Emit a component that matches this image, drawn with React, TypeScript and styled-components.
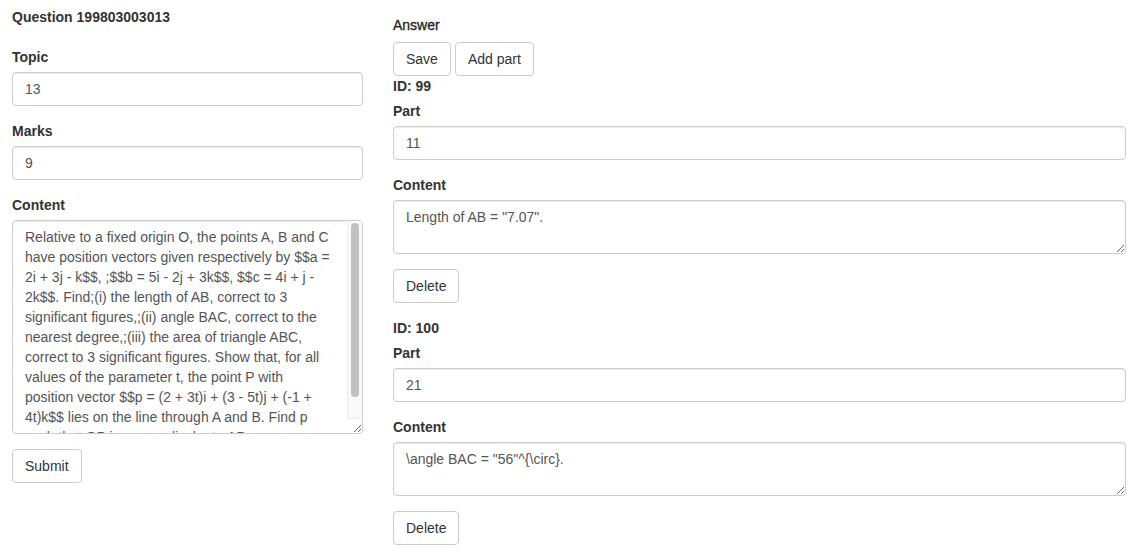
import styled, { createGlobalStyle } from 'styled-components';

const GlobalStyle = createGlobalStyle`
    * { box-sizing: border-box; }
    body {
        margin: 0;
        background: #fff;
        color: #333;
        font-family: "Liberation Sans", Helvetica, Arial, sans-serif;
        font-size: 14px;
        line-height: 20px;
    }
`;

const Page = styled.div`
    display: flex;
    align-items: flex-start;
    padding: 0 18px 0 12px;
`;

const LeftCol = styled.div`
    width: 351px;
    flex: none;
    padding-top: 7px;
`;

const RightCol = styled.div`
    flex: 1;
    margin-left: 30px;
    padding-top: 15px;
`;

const Title = styled.div`
    font-weight: bold;
    margin-bottom: 20px;
`;

const Caption = styled.div`
    color: #222;
    -webkit-text-stroke: 0.3px #222;
    margin-bottom: 7px;
`;

const Label = styled.label`
    display: block;
    font-weight: bold;
    margin-bottom: 5px;
`;

const Group = styled.div`
    margin-bottom: 15px;
`;

const Input = styled.input`
    display: block;
    width: 100%;
    height: 34px;
    padding: 6px 12px;
    font: inherit;
    color: #555;
    background: #fff;
    border: 1px solid #ccc;
    border-radius: 4px;
    box-shadow: inset 0 1px 1px rgba(0, 0, 0, 0.075);
    outline: none;
`;

const AreaWrap = styled.div`
    position: relative;
`;

const TextArea = styled.textarea<{ $h: number; $scroll?: boolean }>`
    display: block;
    width: 100%;
    height: ${(p) => p.$h}px;
    padding: 6px ${(p) => (p.$scroll ? 27 : 12)}px 6px 12px;
    font: inherit;
    line-height: 20px;
    color: #555;
    background: #fff;
    border: 1px solid #ccc;
    border-radius: 4px;
    box-shadow: inset 0 1px 1px rgba(0, 0, 0, 0.075);
    resize: vertical;
    outline: none;
    overflow: hidden;
`;

/* stands in for the macOS scroll bar that the headless browser hides */
const ScrollTrack = styled.div`
    position: absolute;
    top: 1px;
    right: 1px;
    bottom: 15px;
    width: 15px;
    background: #fafafa;
    border-left: 1px solid #ececec;
    border-bottom: 1px solid #ececec;
    border-top-right-radius: 3px;
    pointer-events: none;
`;

const ScrollThumb = styled.div`
    position: absolute;
    top: 2px;
    left: 3px;
    width: 8px;
    height: 174px;
    background: #c1c1c1;
    border-radius: 4px;
`;

const Button = styled.button`
    display: inline-block;
    height: 34px;
    padding: 6px 12px;
    font: inherit;
    color: #333;
    background: #fff;
    border: 1px solid #ccc;
    border-radius: 4px;
    cursor: pointer;
`;

const ButtonRow = styled.div`
    display: flex;
    gap: 4px;
`;

const PartBlock = styled.div`
    margin-bottom: 15px;
`;

const questionText =
    'Relative to a fixed origin O, the points A, B and C have position vectors given respectively by $$a = 2i + 3j - k$$, ;$$b = 5i - 2j + 3k$$, $$c = 4i + j - 2k$$. Find;(i) the length of AB, correct to 3 significant figures,;(ii) angle BAC, correct to the nearest degree,;(iii) the area of triangle ABC, correct to 3 significant figures. Show that, for all values of the parameter t, the point P with position vector $$p = (2 + 3t)i + (3 - 5t)j + (-1 + 4t)k$$ lies on the line through A and B. Find p such that OP is perpendicular to AB.';

const parts = [
    { id: 99, part: '11', content: 'Length of AB = "7.07".' },
    { id: 100, part: '21', content: '\\angle BAC = "56"^{\\circ}.' },
];

const App = () => {
    return (
        <>
            <GlobalStyle />
            <Page>
                <LeftCol>
                    <Title>Question 199803003013</Title>
                    <Group>
                        <Label>Topic</Label>
                        <Input type="text" defaultValue="13" />
                    </Group>
                    <Group>
                        <Label>Marks</Label>
                        <Input type="text" defaultValue="9" />
                    </Group>
                    <Group>
                        <Label>Content</Label>
                        <AreaWrap>
                            <TextArea $h={214} $scroll defaultValue={questionText} />
                            <ScrollTrack>
                                <ScrollThumb />
                            </ScrollTrack>
                        </AreaWrap>
                    </Group>
                    <Button type="submit">Submit</Button>
                </LeftCol>
                <RightCol>
                    <Caption>Answer</Caption>
                    <ButtonRow>
                        <Button>Save</Button>
                        <Button>Add part</Button>
                    </ButtonRow>
                    {parts.map((p) => (
                        <PartBlock key={p.id}>
                            <Label>ID: {p.id}</Label>
                            <Group>
                                <Label>Part</Label>
                                <Input type="text" defaultValue={p.part} />
                            </Group>
                            <Group>
                                <Label>Content</Label>
                                <TextArea $h={54} defaultValue={p.content} />
                            </Group>
                            <Button>Delete</Button>
                        </PartBlock>
                    ))}
                </RightCol>
            </Page>
        </>
    );
};

export default App;
